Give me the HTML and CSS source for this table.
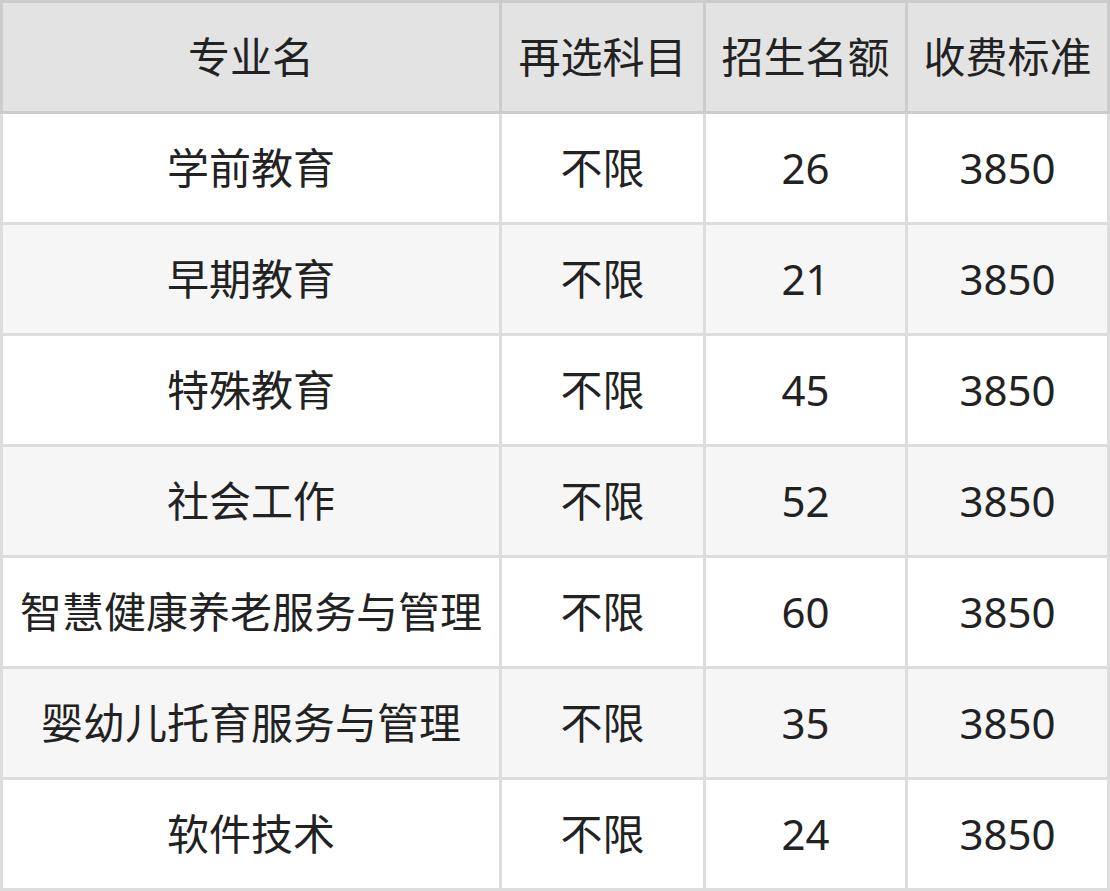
FILE: index.html
```html
<!DOCTYPE html>
<html lang="zh">
<head>
<meta charset="utf-8">
<title>专业招生</title>
<link rel="stylesheet" href="styles.css">
</head>
<body>
<table class="plan">
  <colgroup>
    <col class="c-name">
    <col class="c-subj">
    <col class="c-num">
    <col class="c-fee">
  </colgroup>
  <thead>
    <tr><th>专业名</th><th>再选科目</th><th>招生名额</th><th>收费标准</th></tr>
  </thead>
  <tbody>
    <tr><td>学前教育</td><td>不限</td><td>26</td><td>3850</td></tr>
    <tr><td>早期教育</td><td>不限</td><td>21</td><td>3850</td></tr>
    <tr><td>特殊教育</td><td>不限</td><td>45</td><td>3850</td></tr>
    <tr><td>社会工作</td><td>不限</td><td>52</td><td>3850</td></tr>
    <tr><td>智慧健康养老服务与管理</td><td>不限</td><td>60</td><td>3850</td></tr>
    <tr><td>婴幼儿托育服务与管理</td><td>不限</td><td>35</td><td>3850</td></tr>
    <tr><td>软件技术</td><td>不限</td><td>24</td><td>3850</td></tr>
  </tbody>
</table>
</body>
</html>
```
FILE: styles.css
```css
html, body {
  margin: 0;
  padding: 0;
  background: #ffffff;
}

.plan {
  border-collapse: collapse;
  table-layout: fixed;
  width: 1110px;
  font-family: "Noto Sans", "Noto Sans CJK SC", sans-serif;
  font-size: 42px;
  color: #222222;
}

.c-name { width: 499px; }
.c-subj { width: 204px; }
.c-num { width: 202px; }
.c-fee { width: 202px; }

.plan th,
.plan td {
  height: 108px;
  padding: 0;
  text-align: center;
  vertical-align: middle;
  white-space: nowrap;
  font-weight: normal;
  line-height: 1;
}

.plan th {
  background: #e3e3e3;
  border: 3px solid #cccccc;
}

.plan td {
  border: 3px solid #dddddd;
}

.plan tbody tr:nth-child(even) td {
  background: #f6f6f6;
}
```
